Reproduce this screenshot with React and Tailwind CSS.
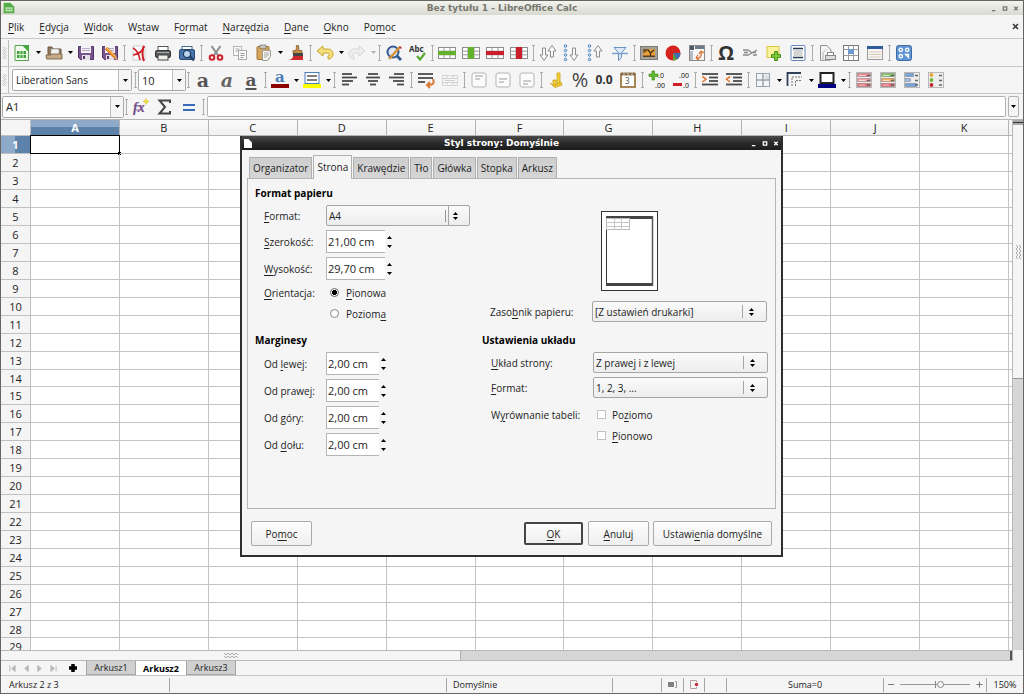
import { clsx } from 'clsx'

// ─── Text with a mnemonic: "_Plik" underlines the P ─────
function Mnemonic({ text }) {
  const at = text.indexOf('_')
  if (at < 0) return text
  return (
    <>
      {text.slice(0, at)}
      <span className="underline underline-offset-2">{text[at + 1]}</span>
      {text.slice(at + 2)}
    </>
  )
}

// ─── Icon pieces ────────────────────────────────────────
function Svg({ children }) {
  return (
    <svg width="18" height="18" viewBox="0 0 18 18" fill="none" className="overflow-visible" aria-hidden="true">
      {children}
    </svg>
  )
}

function Glyph({ children, className }) {
  return <span className={clsx('leading-none', className)}>{children}</span>
}

function Lines({ rows, color = '#4a4a4a' }) {
  return rows.map(([x1, x2, y]) => (
    <path key={y} d={`M${x1} ${y}H${x2}`} stroke={color} strokeWidth="1.8" />
  ))
}

function SheetGrid({ band, vertical }) {
  return (
    <Svg>
      <rect x="0.5" y="3.5" width="17" height="11" fill="#fff" stroke="#8c8c8c" />
      <path d="M0 7.2H18M0 10.8H18M6 3V15M12 3V15" stroke="#9a9a9a" />
      {vertical ? (
        <rect x="6" y="3" width="6" height="12" fill={band} />
      ) : (
        <rect x="0" y="7" width="18" height="4" fill={band} />
      )}
    </Svg>
  )
}

function Floppy({ pencil }) {
  return (
    <Svg>
      <path d="M1.5 2.5h15v13h-13l-2-2z" fill="#77558f" stroke="#503463" />
      <rect x="4" y="2" width="10" height="7" fill="#f6f3f8" />
      <path d="M5 4.5h8M5 6.5h8" stroke="#b9aac4" />
      <rect x="5" y="11" width="8" height="5" fill="#e4dfe8" />
      <rect x="6" y="12" width="2" height="3" fill="#503463" />
      {pencil && (
        <>
          <path d="M5 4L14 13" stroke="#e58a22" strokeWidth="3.4" />
          <path d="M5.5 3.5L14.5 12.5" stroke="#fbd083" strokeWidth="1" />
          <path d="M12.5 14.5l2.5-3 2 5z" fill="#d8a070" />
        </>
      )}
    </Svg>
  )
}

function ArrowV({ x, up }) {
  return (
    <path
      d={
        up
          ? `M${x} 1.5L${x + 4} 7H${x + 1.5}V13H${x - 1.5}V7H${x - 4}Z`
          : `M${x} 16.5L${x + 4} 11H${x + 1.5}V4H${x - 1.5}V11H${x - 4}Z`
      }
      fill="#fafafa"
      stroke="#8c8c8c"
      strokeLinejoin="round"
    />
  )
}

function Dots() {
  return [2, 6.5, 11, 15.5].map((y) => <circle key={y} cx="2.5" cy={y} r="1.3" fill="#cfe0f2" stroke="#4a80bd" strokeWidth="0.9" />)
}

function AlignBox({ y }) {
  return (
    <Svg>
      <rect x="2" y="2" width="14" height="14" rx="2" fill="#fcfcfc" stroke="#b4b4b4" />
      <path d={`M5 ${y}H13M5 ${y + 3}H10`} stroke="#9a9a9a" strokeWidth="1.2" />
    </Svg>
  )
}

function Indent({ out }) {
  return (
    <Svg>
      <Lines rows={[[1, 17, 3], [8, 17, 6.5], [8, 17, 10], [1, 17, 13.5]]} />
      <path d={out ? 'M5 5.5L1.5 8.2L5 11' : 'M1.5 5.5L5 8.2L1.5 11'} stroke="#e07b39" strokeWidth="1.6" />
    </Svg>
  )
}

function CondFormat({ colors, bars, dots }) {
  return (
    <Svg>
      <rect x="1.5" y="1.5" width="15" height="15" fill="#ededed" stroke="#b8b8b8" />
      {colors.map((color, i) => {
        const y = 2 + i * 5
        if (dots) return <circle key={y} cx="4.5" cy={y + 2} r="1.9" fill={color} />
        return <rect key={y} x="2.5" y={y + 0.5} width={bars ? bars[i] : 13} height="3" fill={color} stroke="#00000044" strokeWidth="0.8" />
      })}
      <path d="M12 4.5h3M12 9.5h3M12 14h3" stroke="#666" strokeWidth="1.4" />
      {!bars && !dots && <path d="M4 4.5h6M4 9.5h6M4 14h6" stroke="#ffffff99" />}
    </Svg>
  )
}

// ─── Toolbar icons ──────────────────────────────────────
const icons = {
  new: (
    <Svg>
      <path d="M2 1.5H10L15.5 7V16.5H2Z" fill="#f2faef" stroke="#57a04a" />
      <rect x="4" y="7" width="9" height="7" fill="#3fa33a" />
      <path d="M4 10.5h9M7 7v7M10 7v7" stroke="#d9f2d3" />
      <path d="M9 1h7v7z" fill="#45a83d" />
    </Svg>
  ),
  open: (
    <Svg>
      <path d="M3 13V3h4l1 2h8v8z" fill="#8f7658" stroke="#6d5940" />
      <rect x="6" y="5" width="8" height="6" fill="#f4f4f0" stroke="#999" strokeWidth="0.7" />
      <path d="M1 11h5l1-1h10v5H1.5z" fill="#c4ab87" stroke="#846d4e" />
    </Svg>
  ),
  save: <Floppy />,
  saveAs: <Floppy pencil />,
  pdf: (
    <Svg>
      <path d="M3 2h12v14H3z" fill="#fdfdfd" stroke="#d0d0d0" />
      <path d="M3 4c4 2 6 6 7 12M14 2c-1 5-5 8-11 9" stroke="#cf1f26" strokeWidth="1.6" />
      <path d="M14 2c-2 3-2 11 0 15" stroke="#cf1f26" strokeWidth="2" />
    </Svg>
  ),
  print: (
    <Svg>
      <rect x="4" y="2.5" width="10" height="5" fill="#fff" stroke="#555" />
      <rect x="1.5" y="6.5" width="15" height="7" rx="1.5" fill="#5b5f5c" stroke="#343734" />
      <path d="M3 8.5h12" stroke="#aab" />
      <rect x="4" y="11" width="10" height="5" fill="#eef0ea" stroke="#444" />
    </Svg>
  ),
  preview: (
    <Svg>
      <rect x="4" y="2.5" width="10" height="5" fill="#fff" stroke="#4a6a94" />
      <rect x="1.5" y="5.5" width="15" height="10" rx="1.5" fill="#4a76ae" stroke="#28476f" />
      <circle cx="9" cy="10" r="3.6" fill="#b9d2ee" stroke="#20395c" strokeWidth="1.3" />
      <path d="M12 12.5l4 4" stroke="#20395c" strokeWidth="2" />
    </Svg>
  ),
  cut: (
    <Svg>
      <path d="M4.5 2L11.5 12M13.5 2L6.5 12" stroke="#8e8e8e" strokeWidth="2" />
      <circle cx="5" cy="13.5" r="2.3" stroke="#cc2229" strokeWidth="2" />
      <circle cx="13" cy="13.5" r="2.3" stroke="#cc2229" strokeWidth="2" />
    </Svg>
  ),
  copy: (
    <Svg>
      <rect x="2.5" y="2.5" width="8" height="9" fill="#fafafa" stroke="#b5b5b5" />
      <path d="M4.5 5h4M4.5 7h4" stroke="#aaa" />
      <rect x="7.5" y="6.5" width="8" height="9" fill="#fafafa" stroke="#aaa" />
      <path d="M9.5 9.5h4M9.5 11.5h4M9.5 13.5h3" stroke="#999" />
    </Svg>
  ),
  paste: (
    <Svg>
      <rect x="2" y="2.5" width="12" height="13" rx="1" fill="#d6a55c" stroke="#9d7337" />
      <rect x="5" y="1" width="6" height="3.5" fill="#c7c7c2" stroke="#777" strokeWidth="0.7" />
      <path d="M7.5 6.5h8v6l-3 4h-5z" fill="#f6f6f4" stroke="#9a9a94" />
      <path d="M9 9h5M9 11h5M9 13h3" stroke="#a5a5a0" />
    </Svg>
  ),
  brush: (
    <Svg>
      <path d="M9.500 1.5h2l.5 5h3v3H6v-3h3z" fill="#c28a45" stroke="#80572a" strokeWidth="0.7" />
      <rect x="6" y="9" width="10" height="3" fill="#444" />
      <path d="M6 12h10v4H2c3-1 4-2 4-4z" fill="#cf2a2e" />
    </Svg>
  ),
  undo: (
    <Svg>
      <path d="M1 7L7 2V5H11C15 5 17 7 17 10S15 15 12 15V12C14 12 14 9 11 9H7V12Z" fill="#f6df7d" stroke="#c8a52c" strokeLinejoin="round" />
    </Svg>
  ),
  redo: (
    <Svg>
      <path d="M17 7L11 2V5H7C3 5 1 7 1 10S3 15 6 15V12C4 12 4 9 7 9H11V12Z" fill="#efefef" stroke="#d6d6d6" strokeLinejoin="round" />
    </Svg>
  ),
  find: (
    <Svg>
      <circle cx="8" cy="8" r="5.5" fill="#dfe9f5" stroke="#36598f" strokeWidth="2" />
      <path d="M12 12l4 4" stroke="#36598f" strokeWidth="3" />
      <path d="M4 15L15 3" stroke="#d98e2f" strokeWidth="2.4" />
      <path d="M14.500 2.5l2 2" stroke="#ba3030" strokeWidth="1.5" />
    </Svg>
  ),
  spelling: (
    <Svg>
      <text x="0" y="8" fontSize="8" fontWeight="bold" fontFamily="Noto Sans" fill="#333">Abc</text>
      <path d="M8 12l3 3.5L16 9" stroke="#58a832" strokeWidth="2.2" />
    </Svg>
  ),
  rowAdd: <SheetGrid band="#63b22b" />,
  colAdd: <SheetGrid band="#63b22b" vertical />,
  rowDel: <SheetGrid band="#cc1f2d" />,
  colDel: <SheetGrid band="#cc1f2d" vertical />,
  sort: (
    <Svg>
      <ArrowV x={5} />
      <ArrowV x={13} up />
    </Svg>
  ),
  sortAsc: (
    <Svg>
      <Dots />
      <ArrowV x={11} />
    </Svg>
  ),
  sortDesc: (
    <Svg>
      <Dots />
      <ArrowV x={11} up />
    </Svg>
  ),
  filter: (
    <Svg>
      <path d="M3 3.5h12l-4.500 5.5v4.5l-3 3V9z" fill="#dce9f7" stroke="#6b93c2" />
      <path d="M1 9.5h16" stroke="#7ca0ca" strokeWidth="1.5" />
    </Svg>
  ),
  image: (
    <Svg>
      <rect x="0.5" y="2.5" width="17" height="13" fill="#a3a199" stroke="#7d7b75" />
      <rect x="3" y="5" width="12" height="8" fill="#e5a03a" />
      <path d="M3 5h6l-3 3-3 1z" fill="#7b5327" />
      <path d="M10.5 13V8M8 6l2.5 3L14 6" stroke="#3a2712" strokeWidth="1.2" />
      <path d="M3 11.5h12V13H3z" fill="#5c3f1c" />
    </Svg>
  ),
  chart: (
    <Svg>
      <circle cx="9" cy="9" r="7.5" fill="#d4231f" />
      <path d="M9 9h7.5A7.5 7.5 0 0 1 13 15.4z" fill="#3f6fb0" />
      <path d="M9 9l4 6.4A7.5 7.5 0 0 1 9 16.5z" fill="#5aa338" />
    </Svg>
  ),
  pivot: (
    <Svg>
      <rect x="1.5" y="1.5" width="15" height="15" fill="#f7f7f7" stroke="#8a8a8a" />
      <rect x="2" y="2" width="4" height="4" fill="#4b5a68" />
      <rect x="7" y="2" width="9" height="3" fill="#6e7c89" />
      <rect x="2" y="7" width="3" height="9" fill="#b4bdc6" />
      <path d="M8 14c4 1 6-2 5-6M13 7l-2 3M13 7l3 2M8 14l2-3M8 14l3 2" stroke="#d9702b" strokeWidth="1.3" />
    </Svg>
  ),
  omega: <Glyph className="text-xl font-bold text-[#333]">Ω</Glyph>,
  link: (
    <Svg>
      <path d="M2 6h5l4 3 5-3M2 11h5l4-2M12 11h4M3 8.500h4M11 8.500h4" stroke="#8a8a8a" strokeWidth="1.3" />
    </Svg>
  ),
  comment: (
    <Svg>
      <rect x="2" y="2.5" width="12" height="11" fill="#fbf29a" stroke="#d8c843" />
      <path d="M9.500 7.5h3v3h3v3h-3v3h-3v-3h-3v-3h3z" fill="#78c832" stroke="#4a8f1c" />
    </Svg>
  ),
  header: (
    <Svg>
      <rect x="2" y="1.5" width="14" height="15" rx="1" fill="#fff" stroke="#6689b8" />
      <path d="M4 4.500h10M4 13.500h10" stroke="#26394f" strokeWidth="1.6" />
      <path d="M4.500 7h9M4.500 9h9M4.500 11h9" stroke="#a9a9a9" />
    </Svg>
  ),
  printArea: (
    <Svg>
      <path d="M2.500 16.5v-15H9L13 6v10z" fill="#f4f4f4" stroke="#8f8f8f" />
      <path d="M5 16.500v-8l3-3" stroke="#b5b5b5" />
      <rect x="7.5" y="11.5" width="10" height="4" fill="#ddd" stroke="#888" />
      <rect x="9.5" y="8.5" width="6" height="3" fill="#fff" stroke="#888" />
    </Svg>
  ),
  freeze: (
    <Svg>
      <rect x="1.5" y="1.5" width="15" height="15" fill="#fff" stroke="#777" />
      <path d="M1.500 5.500h15M1.500 11.500h15M6.500 1.500v15M11.500 1.500v15" stroke="#9a9a9a" />
      <rect x="6" y="5" width="6" height="5" fill="#6c9bd0" />
    </Svg>
  ),
  window: (
    <Svg>
      <rect x="1.5" y="2.5" width="15" height="13" fill="#f8f6f2" stroke="#999" />
      <rect x="1" y="2" width="16" height="3" fill="#2f5c96" />
      <path d="M3 8h12M3 10.500h12M3 13h12" stroke="#d8c8ba" />
    </Svg>
  ),
  gallery: (
    <Svg>
      <rect x="1.5" y="1.5" width="15" height="15" rx="2" fill="#5f93d1" stroke="#3d6ca7" />
      <g stroke="#fff" strokeWidth="1.3">
        <circle cx="5.8" cy="5.8" r="1.7" />
        <circle cx="12.2" cy="5.8" r="1.7" />
        <circle cx="5.8" cy="12.2" r="1.7" />
        <path d="M10.500 10.500h3v3z" />
      </g>
    </Svg>
  ),
  bold: <Glyph className="font-[DejaVu_Serif] text-[19px] font-bold text-[#555]">a</Glyph>,
  italic: <Glyph className="font-[DejaVu_Serif] text-[19px] font-bold italic text-[#666]">a</Glyph>,
  underline: (
    <Glyph className="font-[DejaVu_Serif] text-[17px] font-bold text-[#555] underline decoration-2 underline-offset-2">a</Glyph>
  ),
  fontColor: (
    <Svg>
      <text x="4" y="11" fontSize="15" fontWeight="bold" fontFamily="DejaVu Serif" fill="#4a7ebb">a</text>
      <rect x="0" y="13" width="18" height="4" fill="#8f0000" />
    </Svg>
  ),
  highlight: (
    <Svg>
      <rect x="2" y="1.5" width="14" height="11" fill="#fff" stroke="#4a7ebb" />
      <path d="M4 5h10M4 9h10" stroke="#555" strokeWidth="1.6" />
      <rect x="0" y="13" width="18" height="4" fill="#ffff00" />
    </Svg>
  ),
  left: <Svg><Lines rows={[[2, 12, 3], [2, 17, 6.5], [2, 13, 10], [2, 9, 13.5]]} /></Svg>,
  center: <Svg><Lines rows={[[4, 14, 3], [2, 16, 6.5], [4, 14, 10], [6, 12, 13.5]]} /></Svg>,
  right: <Svg><Lines rows={[[6, 16, 3], [1, 16, 6.5], [5, 16, 10], [9, 16, 13.5]]} /></Svg>,
  wrap: (
    <Svg>
      <Lines rows={[[1, 16, 3], [1, 16, 7], [1, 8, 11]]} />
      <path d="M16 8c2 5-1 6-5 6M13 11l-3 3 3 3" stroke="#dd7a38" strokeWidth="2" />
    </Svg>
  ),
  merge: (
    <Svg>
      <rect x="1.5" y="4.5" width="15" height="10" fill="#f6f6f6" stroke="#d6d6d6" />
      <path d="M1 7.500h16M1 11.500h16M6 4v3M12 4v3M6 12v2M12 12v2M4 9.500h10" stroke="#d0d0d0" />
    </Svg>
  ),
  top: <AlignBox y={5} />,
  middle: <AlignBox y={8} />,
  bottom: <AlignBox y={10} />,
  currency: (
    <Svg>
      <path d="M10 2h3v11h-3zM6 9h3v5H6z" fill="#f3d335" stroke="#c9a01c" strokeWidth="0.8" />
      <path d="M3 12l4 3 7-4 1 3-7 2.500z" fill="#f0cb2c" stroke="#c9a01c" strokeWidth="0.8" />
    </Svg>
  ),
  percent: <Glyph className="text-xl text-[#444]">%</Glyph>,
  number: <Glyph className="text-[12px] font-bold text-[#333]">0.0</Glyph>,
  date: (
    <Svg>
      <rect x="2" y="3" width="14" height="13" fill="#fff" stroke="#a58455" strokeWidth="2" />
      <path d="M2 3h14" stroke="#8d6d3f" strokeWidth="3" />
      <path d="M5 1v4M9 1v4M13 1v4" stroke="#ccc" />
      <text x="6" y="13" fontSize="8" fontFamily="Noto Sans" fill="#555">3</text>
    </Svg>
  ),
  decAdd: (
    <Svg>
      <path d="M4 0h2.500v3H10v2.500H6.500V9H4V5.500H1V3h3z" fill="#62bb2c" stroke="#418c18" strokeWidth="0.7" />
      <text x="10" y="7" fontSize="7" fontFamily="Noto Sans" fill="#222">.0</text>
      <text x="7" y="17" fontSize="7" fontFamily="Noto Sans" fill="#222">.00</text>
    </Svg>
  ),
  decDel: (
    <Svg>
      <text x="7" y="7" fontSize="7" fontFamily="Noto Sans" fill="#222">.00</text>
      <text x="11" y="17" fontSize="7" fontFamily="Noto Sans" fill="#222">.0</text>
      <rect x="1" y="12" width="9" height="3" fill="#d01f28" />
    </Svg>
  ),
  indent: <Indent />,
  outdent: <Indent out />,
  borders: (
    <Svg>
      <rect x="2.5" y="2.5" width="13" height="13" fill="#f3f5f8" stroke="#9ba3ae" />
      <path d="M9 2.500v13M2.500 9h13" stroke="#9ba3ae" strokeWidth="1.5" />
      <path d="M11 5h4M11 7h4" stroke="#c0c8d2" />
    </Svg>
  ),
  lineStyle: (
    <Svg>
      <path d="M1.500 15V2H15" stroke="#2f4059" strokeWidth="1.8" />
      <path d="M6 15V6h10M9.500 15V9.500H16" stroke="#777" strokeDasharray="2 1" />
    </Svg>
  ),
  lineColor: (
    <Svg>
      <rect x="2.5" y="2" width="13" height="10" fill="#fff" stroke="#222" strokeWidth="2" />
      <rect x="0" y="13" width="18" height="4" fill="#000080" />
    </Svg>
  ),
  cond: <CondFormat colors={['#f28c94', '#f4a3aa', '#ef6f79']} />,
  condScale: <CondFormat colors={['#86c765', '#f6b063', '#ee6872']} />,
  condBars: <CondFormat colors={['#76a4dc', '#9dbfe8', '#76a4dc']} bars={[8, 5, 11]} />,
  condIcons: <CondFormat colors={['#e8a33b', '#6abf36', '#c52630']} dots />,
}

// '|' is a separator, a trailing '+' gives the button a drop-down arrow
const standardBar =
  'new+ open+ save saveAs | pdf print preview | cut copy paste+ brush | undo+ redo+ | find spelling | rowAdd colAdd rowDel colDel | sort sortAsc sortDesc filter | image chart pivot | omega link comment header | printArea freeze window | gallery'
const formatBar =
  'bold italic underline | fontColor+ highlight+ | left center right | wrap merge | top middle bottom | currency percent number date | decAdd decDel | indent outdent | borders+ lineStyle+ lineColor+ | cond condScale condBars condIcons'

const faded = ['redo']

// ─── Bars ───────────────────────────────────────────────
function Separator() {
  return (
    <svg width="5" height="18" viewBox="0 0 5 18" className="shrink-0" aria-hidden="true">
      <path d="M2.5 1V17M1 1.5H4M1 16.5H4" stroke="#adadad" />
    </svg>
  )
}

function Triangle({ className, up }) {
  return (
    <svg width="5" height="3" viewBox="0 0 5 3" className={clsx('shrink-0', className)} aria-hidden="true">
      <path d={up ? 'M0 3H5L2.5 0Z' : 'M0 0H5L2.5 3Z'} fill="currentColor" />
    </svg>
  )
}

function ToolItems({ items }) {
  return items.split(' ').map((item, i) => {
    if (item === '|') return <Separator key={i} />
    const name = item.replace('+', '')
    return (
      <div key={i} className="flex shrink-0 items-center">
        <button type="button" aria-label={name} className="flex h-6 w-6 items-center justify-center">
          {icons[name]}
        </button>
        {item.endsWith('+') && (
          <button type="button" aria-label={`${name} menu`} className="flex h-6 w-2 items-center justify-center">
            <Triangle className={faded.includes(name) ? 'text-[#b0b0b0]' : 'text-black'} />
          </button>
        )}
      </div>
    )
  })
}

function Grip() {
  return (
    <svg width="8" height="26" viewBox="0 0 8 26" className="shrink-0 border-r border-[#bdbdbd]" aria-hidden="true">
      <path d="M2 6l2 2-2 2 2 2-2 2 2 2-2 2 2 2M4 6l2 2-2 2 2 2-2 2 2 2-2 2 2 2" stroke="#c4c4c4" fill="none" />
    </svg>
  )
}

function Combo({ label, value, className }) {
  return (
    <div className={clsx('flex h-[22px] shrink-0 rounded-xs border border-[#a8a8a8] bg-white', className)}>
      <input aria-label={label} defaultValue={value} className="w-0 flex-1 bg-transparent pl-[3px] outline-none" />
      <button type="button" aria-label={`${label} – lista`} className="flex w-[13px] items-center justify-center border-l border-[#bcbcbc] bg-[#f5f5f5] text-black">
        <Triangle />
      </button>
    </div>
  )
}

function WindowButtons({ className }) {
  return (
    <div className={clsx('flex items-center gap-[5px]', className)}>
      {['M1 6H5', 'M1.5 1.5H5.5V5.5H1.5Z', 'M1.5 1.5L5.5 5.5M5.5 1.5L1.5 5.5'].map((d, i) => (
        <button key={d} type="button" aria-label={['Minimalizuj', 'Maksymalizuj', 'Zamknij'][i]}>
          <svg width="6" height="7" viewBox="0 0 7 7" fill="none">
            <path d={d} stroke="currentColor" strokeWidth="1.5" />
          </svg>
        </button>
      ))}
    </div>
  )
}

const menus = ['_Plik', '_Edycja', '_Widok', 'W_staw', 'F_ormat', '_Narzędzia', '_Dane', '_Okno', 'Po_moc']

function TitleBar() {
  return (
    <header className="flex h-[14px] shrink-0 items-center justify-between bg-linear-to-b from-[#f3f3ef] via-[#e6e7df] to-[#d9dacf] px-px font-[DejaVu_Sans] text-[9px] font-bold text-[#77776f]">
      <div className="w-4">
        <svg width="12" height="12" viewBox="0 0 18 18" className="ml-px" aria-hidden="true">
          <path d="M1 1H11L17 7V17H1Z" fill="#55ad48" />
          <path d="M4 8h10v6H4z" fill="#dff5da" />
          <path d="M4 11h10M7.500 8v6M11 8v6" stroke="#55ad48" />
        </svg>
      </div>
      <h1>Bez tytułu 1 - LibreOffice Calc</h1>
      <WindowButtons className="w-9 justify-end pr-[3px]" />
    </header>
  )
}

function FormulaBar() {
  return (
    <div className="flex h-[25px] items-center pl-px">
      <Combo label="Pole nazwy" value="A1" className="w-[122px] text-[11px]" />
      <Separator />
      <button type="button" aria-label="Kreator funkcji" className="flex w-6 justify-center">
        <Svg>
          <text x="1" y="14" fontSize="14" fontWeight="bold" fontStyle="italic" fontFamily="Liberation Serif" fill="#6d4584">fx</text>
          <path d="M2 8h9M3 12h8" stroke="#8d68a3" />
          <path d="M14 0.500l1 2 2 1-2 1-1 2-1-2-2-1 2-1z" fill="#f3dc4b" stroke="#d9bc2b" strokeWidth="0.5" />
        </Svg>
      </button>
      <button type="button" aria-label="Suma" className="flex w-6 justify-center">
        <Svg>
          <path d="M14 5V2.500H3.500L9 9L3.500 15.500H14V13" stroke="#444" strokeWidth="2" />
        </Svg>
      </button>
      <button type="button" aria-label="Funkcja" className="flex w-6 justify-center">
        <Svg>
          <path d="M3 7H15M3 12H15" stroke="#3a6bbb" strokeWidth="2" />
        </Svg>
      </button>
      <Separator />
      <input aria-label="Wiersz wprowadzania" className="ml-px h-[21px] flex-1 rounded-xs border border-[#b0b0b0] bg-white px-1 outline-none" />
      <button type="button" aria-label="Rozwiń pasek formuły" className="mr-[4px] ml-[2px] flex h-[21px] w-[11px] items-center justify-center rounded-xs border border-[#b0b0b0] text-black">
        <Triangle />
      </button>
    </div>
  )
}

// ─── Spreadsheet ────────────────────────────────────────
const columns = 'ABCDEFGHIJK'.split('')
const rows = Array.from({ length: 29 }, (_, i) => i + 1)

function Sheet() {
  return (
    <div className="h-0 flex-1 overflow-hidden bg-white">
      <table className="w-full table-fixed border-separate border-spacing-0 text-center text-[11px] leading-none">
        <thead>
          <tr className="h-4">
            <th className="w-[30px] border-r border-b border-[#c0c0c0] bg-[#f5f5f5]" />
            {columns.map((name) => (
              <th
                key={name}
                scope="col"
                className={clsx(
                  'border-r border-b border-[#b4b4b4] p-0',
                  name === 'A'
                    ? 'bg-linear-to-b from-[#8fa9c8] from-50% to-[#5d82a9] to-50% font-bold text-white'
                    : 'bg-linear-to-b from-[#fafafa] to-[#f1f1f1] font-normal',
                )}
              >
                {name}
              </th>
            ))}
            <th className="w-[3px] border-b border-[#b4b4b4] bg-[#f5f5f5]" />
          </tr>
        </thead>
        <tbody>
          {rows.map((row) => (
            <tr key={row} className={row % 14 ? 'h-[18px]' : 'h-[17px]'}>
              <th
                scope="row"
                className={clsx(
                  'border-r border-b border-[#c0c0c0] p-0',
                  row === 1
                    ? 'bg-linear-to-r from-[#8fa9c8] from-50% to-[#5d82a9] to-50% font-bold text-white'
                    : 'bg-[#f5f5f5] font-normal',
                )}
              >
                {row}
              </th>
              {columns.map((name) => (
                <td key={name} className="relative border-r border-b border-[#c4c4c4] p-0">
                  {row === 1 && name === 'A' && (
                    <div className="absolute -inset-px border border-black">
                      <div className="absolute -right-[2px] -bottom-[2px] h-[3px] w-[3px] bg-black" />
                    </div>
                  )}
                </td>
              ))}
              <td className="border-b border-[#c4c4c4] p-0" />
            </tr>
          ))}
        </tbody>
      </table>
    </div>
  )
}

function HorizontalScroll() {
  return (
    <div className="flex h-[11px] shrink-0 border-y border-[#b8b8b8] bg-[#d6d6d6]">
      <div className="flex w-[45.5%] items-center justify-center border-r border-[#b0b0b0] bg-[#f5f5f5]">
        <svg width="14" height="5" viewBox="0 0 14 5" fill="none" aria-hidden="true">
          <path d="M0 0l2 2 2-2 2 2 2-2 2 2 2-2 2 2M0 3l2 2 2-2 2 2 2-2 2 2 2-2 2 2" stroke="#aaa" />
        </svg>
      </div>
      <div className="ml-auto w-[2px] bg-[#555]" />
    </div>
  )
}

function VerticalScroll() {
  return (
    <div className="flex w-[11px] flex-col border-l border-[#b8b8b8] bg-[#d6d6d6]">
      <div className="h-[5px] border-y-2 border-[#aaa] bg-[#333]" />
      <div className="flex h-[47%] items-center justify-center border-b border-[#999] bg-[#f5f5f5]">
        <svg width="5" height="14" viewBox="0 0 5 14" fill="none" aria-hidden="true">
          <path d="M0 0l2 2-2 2 2 2-2 2 2 2-2 2 2 2M3 0l2 2-2 2 2 2-2 2 2 2-2 2 2 2" stroke="#aaa" />
        </svg>
      </div>
      <div className="mt-auto h-[11px] bg-[#f5f5f5]" />
    </div>
  )
}

const navIcons = [
  ['Pierwszy arkusz', 'M1 0V7M7 0L3 3.5L7 7Z'],
  ['Poprzedni arkusz', 'M6 0L2 3.5L6 7Z'],
  ['Następny arkusz', 'M2 0L6 3.5L2 7Z'],
  ['Ostatni arkusz', 'M7 0V7M1 0L5 3.5L1 7Z'],
]

function SheetTabs() {
  return (
    <div className="flex h-[14px] shrink-0 text-[9px]">
      <div className="flex w-[59px] items-center justify-around pl-[5px]">
        {navIcons.map(([label, d]) => (
          <button key={label} type="button" aria-label={label}>
            <svg width="7" height="7" viewBox="0 0 8 7">
              <path d={d} fill="#b8b8b8" stroke="#b8b8b8" />
            </svg>
          </button>
        ))}
      </div>
      <button type="button" aria-label="Dodaj arkusz" className="flex w-[26px] items-center justify-center">
        <svg width="8" height="8" viewBox="0 0 8 8">
          <path d="M4 0V8M0 4H8" stroke="#000" strokeWidth="3.5" />
        </svg>
      </button>
      {['Arkusz1', 'Arkusz2', 'Arkusz3'].map((name) => (
        <button
          key={name}
          type="button"
          className={clsx(
            'flex w-[50px] items-center justify-center',
            name === 'Arkusz2' ? 'bg-white font-bold text-black' : 'border border-t-0 border-[#a5a5a5] bg-[#d0d0d0]',
          )}
        >
          {name}
        </button>
      ))}
    </div>
  )
}

function StatusCell({ className, children }) {
  return <div className={clsx('flex h-[14px] items-center border-r border-[#a5a5a5]', className)}>{children}</div>
}

function StatusBar() {
  return (
    <footer className="flex h-[18px] shrink-0 items-center border-t border-[#c6c6c6] text-[9px]">
      <StatusCell className="w-[169px] pl-[8px]">Arkusz 2 z 3</StatusCell>
      <StatusCell className="flex-1" />
      <StatusCell className="w-[166px] pl-[6px]">Domyślnie</StatusCell>
      <StatusCell className="w-[49px]" />
      <StatusCell className="w-[22px] justify-center">
        <svg width="9" height="7" viewBox="0 0 9 7" aria-hidden="true">
          <rect y="1" width="6" height="5" fill="#808080" />
          <path d="M7 .5h1.500v6H7" stroke="#999" fill="none" />
        </svg>
      </StatusCell>
      <StatusCell className="w-[21px] justify-center">
        <svg width="9" height="9" viewBox="0 0 9 9" aria-hidden="true">
          <path d="M6.500 2V.5h-6v8h6V7" stroke="#b0a0a0" fill="none" />
          <circle cx="6.5" cy="4.5" r="1.7" fill="#c2273a" />
        </svg>
      </StatusCell>
      <StatusCell className="w-[22px]" />
      <StatusCell className="w-[157px] justify-center">Suma=0</StatusCell>
      <StatusCell className="w-[103px] justify-center gap-[6px] text-[#777]">
        <button type="button" aria-label="Pomniejsz" className="h-px w-[6px] bg-[#777]" />
        <div className="relative flex items-center">
          <input
            type="range"
            aria-label="Powiększenie"
            defaultValue="60"
            className="h-px w-[70px] appearance-none bg-[#999] [&::-webkit-slider-thumb]:h-[7px] [&::-webkit-slider-thumb]:w-[7px] [&::-webkit-slider-thumb]:appearance-none [&::-webkit-slider-thumb]:rounded-full [&::-webkit-slider-thumb]:border [&::-webkit-slider-thumb]:border-[#888] [&::-webkit-slider-thumb]:bg-[#f5f5f5]"
          />
          <div className="absolute left-1/2 h-[7px] w-px bg-[#888]" />
        </div>
        <button type="button" aria-label="Powiększ">
          <svg width="7" height="7" viewBox="0 0 7 7">
            <path d="M3.500 0.500V6.500M0.500 3.500H6.500" stroke="#777" />
          </svg>
        </button>
      </StatusCell>
      <div className="w-[36px] text-center">150%</div>
    </footer>
  )
}

// ─── Dialog ─────────────────────────────────────────────
const dialogTabs = ['Organizator', 'Strona', 'Krawędzie', 'Tło', 'Główka', 'Stopka', 'Arkusz']

function Field({ id, label, className, labelWidth = 'w-[62px]', children }) {
  return (
    <div className={clsx('flex items-center', className)}>
      <label htmlFor={id} className={clsx('shrink-0', labelWidth)}>
        <Mnemonic text={label} />
      </label>
      {children}
    </div>
  )
}

function Select({ id, value, split, className }) {
  return (
    <div className={clsx('relative h-[21px]', className)}>
      <select
        id={id}
        className="h-full w-full appearance-none rounded-xs border border-[#a6a6a6] bg-linear-to-b from-[#fafafa] to-[#ededed] pl-[2px] leading-4 text-[#222] outline-none"
      >
        <option>{value}</option>
      </select>
      <div className="pointer-events-none absolute inset-y-0 right-0 flex items-center">
        {split && <div className="mr-[2px] h-3 w-px bg-[#999]" />}
        <div className={clsx('w-px bg-[#a6a6a6]', split ? 'h-full' : 'h-[13px]')} />
        <div className={clsx('flex flex-col gap-[2px] text-black', split ? 'mr-[12px] ml-[4px]' : 'mr-[13px] ml-[6px]')}>
          <Triangle up />
          <Triangle />
        </div>
      </div>
    </div>
  )
}

function Spin({ id, value, className }) {
  return (
    <div className="flex h-[23px]">
      <input
        id={id}
        defaultValue={value}
        className={clsx('border border-r-0 border-[#b5b5b5] bg-white pl-px text-[11px] text-[#222] outline-none', className)}
      />
      <div className="flex w-2 flex-col justify-between py-[3px] text-black">
        <button type="button" aria-label="Zwiększ" className="flex h-2 items-center justify-center"><Triangle up /></button>
        <button type="button" aria-label="Zmniejsz" className="flex h-2 items-center justify-center"><Triangle /></button>
      </div>
    </div>
  )
}

function Radio({ id, label, defaultChecked }) {
  return (
    <div className="flex items-center gap-[7px] pl-1">
      <input
        type="radio"
        name="orientation"
        id={id}
        defaultChecked={defaultChecked}
        className="h-[9px] w-[9px] appearance-none rounded-full border border-[#888] bg-white checked:border-[#666] checked:bg-radial checked:from-black checked:from-45% checked:to-white checked:to-55%"
      />
      <label htmlFor={id}><Mnemonic text={label} /></label>
    </div>
  )
}

function Check({ id, label }) {
  return (
    <div className="flex items-center gap-[6px] pl-1">
      <input type="checkbox" id={id} className="h-[9px] w-[9px] appearance-none border border-[#c2c2c2] bg-white checked:bg-[#555]" />
      <label htmlFor={id}><Mnemonic text={label} /></label>
    </div>
  )
}

function PagePreview() {
  return (
    <svg width="57" height="80" viewBox="0 0 57 80" fill="none" role="img" aria-label="Podgląd strony">
      <rect x="0.5" y="0.5" width="56" height="79" fill="#fff" stroke="#333" />
      <rect x="5.5" y="6" width="46" height="68" fill="#fff" stroke="#333" />
      <path d="M5 6.500H52M5 73.500H52" stroke="#444" strokeWidth="3" />
      <path d="M51.500 5V75" stroke="#555" strokeWidth="1.5" />
      <rect x="5.5" y="7.5" width="23" height="11" fill="#fff" stroke="#bbb" />
      <path d="M5 11.500H29M5 15.500H29M13.500 7V19M20.500 7V19" stroke="#c4c4c4" />
    </svg>
  )
}

const margins = [
  ['m-left', 'Od _lewej:'],
  ['m-right', 'Od prawe_j:'],
  ['m-top', 'Od _góry:'],
  ['m-bottom', 'Od _dołu:'],
]

function DialogButton({ label, className }) {
  return (
    <button
      type="button"
      className={clsx('rounded-xs bg-linear-to-b from-[#fdfdfd] to-[#efefef] text-[#222]', className)}
    >
      <Mnemonic text={label} />
    </button>
  )
}

function PageStyleDialog() {
  return (
    <section
      role="dialog"
      aria-label="Styl strony: Domyślnie"
      className="absolute top-[135px] left-[239px] w-[543px] border-x-2 border-b-2 border-[#2e2e33] bg-[#f5f5f5] text-[#222]"
    >
      <div className="flex h-[14px] items-center justify-between bg-linear-to-b from-[#4a4a4a] via-[#2a2a2a] to-[#1c1c1c] font-[DejaVu_Sans] text-[9px] font-bold text-white">
        <div className="w-4">
          <svg width="8" height="9" viewBox="0 0 8 9" className="ml-[2px]" aria-hidden="true">
            <path d="M0 0H4.500L8 3.500V9H0Z" fill="#fff" />
          </svg>
        </div>
        <h2>Styl strony: Domyślnie</h2>
        <WindowButtons className="w-9 justify-end pr-[2px]" />
      </div>

      <div className="px-[5px] pt-[5px]">
        <div role="tablist" className="flex items-end gap-px pl-[2px]">
          {dialogTabs.map((tab) => (
            <button
              key={tab}
              type="button"
              role="tab"
              aria-selected={tab === 'Strona'}
              className={clsx(
                'border border-b-0 border-[#b0b0b0] px-[3px]',
                tab === 'Strona' ? '-mb-px h-6 bg-[#f5f5f5] pb-[2px]' : 'h-[21px] bg-linear-to-b from-[#cecece] to-[#d6d6d6]',
              )}
            >
              {tab}
            </button>
          ))}
        </div>

        <div role="tabpanel" className="grid h-[331px] grid-cols-[227px_1fr] border border-[#b5b5b5] pt-1 pl-[7px]">
          <div>
            <h3 className="flex h-5 items-center font-bold text-black">Format papieru</h3>
            <div className="pl-[9px]">
              <Field id="format" label="_Format:" className="h-[25px]">
                <Select id="format" value="A4" split className="w-[144px]" />
              </Field>
              <Field id="width" label="_Szerokość:" className="h-[27px]">
                <Spin id="width" value="21,00 cm" className="w-[59px]" />
              </Field>
              <Field id="height" label="_Wysokość:" className="h-[27px]">
                <Spin id="height" value="29,70 cm" className="w-[59px]" />
              </Field>
              <Field id="portrait" label="_Orientacja:" className="h-[21px]">
                <Radio id="portrait" label="_Pionowa" defaultChecked />
              </Field>
              <div className="flex h-[21px] items-center pl-[62px]">
                <Radio id="landscape" label="Poziom_a" />
              </div>
            </div>
            <h3 className="mt-[6px] flex h-5 items-center font-bold text-black">Marginesy</h3>
            <div className="pl-[9px]">
              {margins.map(([id, label]) => (
                <Field key={id} id={id} label={label} className="h-[27px]">
                  <Spin id={id} value="2,00 cm" className="w-[53px]" />
                </Field>
              ))}
            </div>
          </div>

          <div>
            <div className="flex h-[118px] items-end pb-[10px] pl-[119px]">
              <PagePreview />
            </div>
            <Field id="tray" label="Zaso_bnik papieru:" labelWidth="w-[102px]" className="h-[21px] pl-[8px]">
              <Select id="tray" value="[Z ustawień drukarki]" className="w-[175px]" />
            </Field>
            <h3 className="mt-2 flex h-5 items-center font-bold text-black">Ustawienia układu</h3>
            <div className="pl-[9px]">
              <Field id="layout" label="_Układ strony:" labelWidth="w-[102px]" className="h-[25px]">
                <Select id="layout" value="Z prawej i z lewej" className="w-[175px]" />
              </Field>
              <Field id="numbering" label="_Format:" labelWidth="w-[102px]" className="h-[25px]">
                <Select id="numbering" value="1, 2, 3, ..." className="w-[175px]" />
              </Field>
              <Field id="horizontal" label="W_yrównanie tabeli:" labelWidth="w-[102px]" className="mt-1 h-[21px]">
                <Check id="horizontal" label="Po_ziomo" />
              </Field>
              <div className="flex h-[21px] items-center pl-[102px]">
                <Check id="vertical" label="_Pionowo" />
              </div>
            </div>
          </div>
        </div>
      </div>

      <div className="flex items-center px-[9px] pt-3 pb-[9px]">
        <DialogButton label="Po_moc" className="h-[25px] w-[61px] border border-[#aaa]" />
        <DialogButton label="_OK" className="ml-auto h-[23px] w-[59px] border-2 border-[#444]" />
        <DialogButton label="_Anuluj" className="ml-[5px] h-[25px] w-[61px] border border-[#aaa]" />
        <DialogButton label="Ustawi_enia domyślne" className="ml-1 h-[25px] w-[119px] border border-[#aaa]" />
      </div>
    </section>
  )
}

// ─── App ────────────────────────────────────────────────
export default function App() {
  return (
    <div className="relative flex h-screen flex-col overflow-hidden border border-[#66655f] bg-[#f5f5f5] font-['Open_Sans','Noto_Sans',sans-serif] text-[10px] leading-none text-[#222]">
      <TitleBar />
      <nav className="flex h-[23px] shrink-0 items-center gap-[15px] pr-1 pl-[7px]">
        {menus.map((menu) => (
          <button key={menu} type="button"><Mnemonic text={menu} /></button>
        ))}
        <button type="button" aria-label="Zamknij dokument" className="ml-auto">
          <svg width="7" height="7" viewBox="0 0 7 7">
            <path d="M1 1L6 6M6 1L1 6" stroke="#333" strokeWidth="1.5" />
          </svg>
        </button>
      </nav>
      <div className="flex h-7 shrink-0 items-center gap-px border-t border-[#c8c8c8]">
        <Grip />
        <div className="flex items-center"><ToolItems items={standardBar} /></div>
      </div>
      <div className="flex h-[27px] shrink-0 items-center border-t border-[#c8c8c8]">
        <Grip />
        <Combo label="Nazwa czcionki" value="Liberation Sans" className="ml-[3px] w-[120px]" />
        <div className="pl-px"><Separator /></div>
        <Combo label="Rozmiar czcionki" value="10" className="w-[48px] text-[11px]" />
        <Separator />
        <ToolItems items={formatBar} />
      </div>
      <div className="shrink-0 border-t border-[#c8c8c8]">
        <FormulaBar />
      </div>
      <div className="flex min-h-0 flex-1 border-t border-[#b4b4b4]">
        <main className="flex min-h-0 min-w-0 flex-1 flex-col">
          <Sheet />
          <HorizontalScroll />
        </main>
        <VerticalScroll />
      </div>
      <SheetTabs />
      <StatusBar />
      <PageStyleDialog />
    </div>
  )
}
